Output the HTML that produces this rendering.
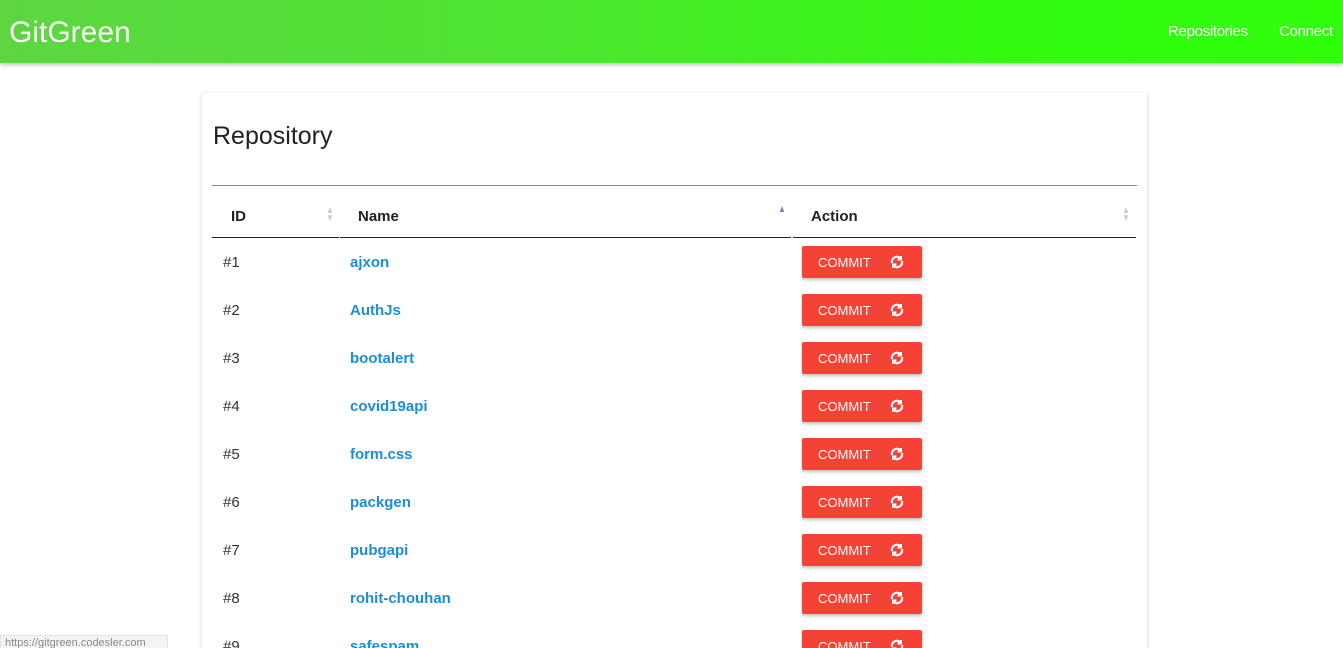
<!DOCTYPE html>
<html style="overflow:hidden;height:648px"><head><style>
*{box-sizing:border-box;margin:0;padding:0}
html,body{width:1343px;height:648px;overflow:hidden}
body{background:#fff;font-family:"Liberation Sans",sans-serif;position:relative}
.nav{position:absolute;left:0;top:0;width:1343px;height:63px;background:linear-gradient(90deg,#5dd641 0%,#4ee632 40%,#33fb10 75%,#30ff0c 100%);box-shadow:0 2px 4px rgba(0,0,0,.25)}
.logo{position:absolute;left:9px;top:16px;font-size:30px;color:#fff}
.nl{position:absolute;top:23px;font-size:15px;color:#fff;letter-spacing:-0.3px}
.card{position:absolute;left:202px;top:93px;width:945px;height:555px;overflow:hidden;background:#fff;box-shadow:0 1px 4px rgba(0,0,0,.2)}
h1{position:absolute;left:11px;top:29px;font-size:25px;font-weight:normal;color:#222}
.hr{position:absolute;left:10px;top:92px;width:925px;height:1px;background:#888}
.th{position:absolute;top:115px;font-size:15px;font-weight:bold;color:#222}
.hb{position:absolute;top:144px;height:1px;background:#222}
.sort{position:absolute;top:114px;font-size:10px;color:#ccc;line-height:8px;transform:scaleX(.8)}
.row{position:absolute;left:0;width:945px;height:48px}
.id{position:absolute;left:21px;top:0;font-size:15px;color:#333}
.nm{position:absolute;left:148px;top:0;font-size:15px;font-weight:bold;color:#1a8fd6}
.btn{position:absolute;left:600px;top:-8px;width:120px;height:32px;background:#f44336;border-radius:2px;box-shadow:0 2px 3px rgba(0,0,0,.25);color:#fff;font-size:13px;padding:9px 0 0 16px}
.btn svg{position:absolute;left:87px;top:8px}
.status{position:absolute;left:0;top:635px;width:168px;height:13px;overflow:hidden;background:#f4f4f4;border:1px solid #e2e2e2;border-bottom:0;font-size:11px;color:#888;padding:1px 4px}
</style></head><body>
<div class="nav"><div class="logo">GitGreen</div><div class="nl" style="left:1168px">Repositories</div><div class="nl" style="left:1279px">Connect</div></div>
<div class="card">
<h1>Repository</h1>
<div class="hr"></div>
<div class="th" style="left:29px">ID</div>
<div class="th" style="left:156px">Name</div>
<div class="th" style="left:609px">Action</div>
<div class="sort" style="left:123px">▲<br>▼</div>
<div class="sort" style="left:575px;color:#7b7bd0;top:113px">▲</div>
<div class="sort" style="left:919px">▲<br>▼</div>
<div class="hb" style="left:10px;width:127px"></div>
<div class="hb" style="left:138px;width:451px"></div>
<div class="hb" style="left:591px;width:343px"></div>
<div id="rows"></div>
</div>
<div class="status">https://gitgreen.codesler.com</div>
<script>
var n=["ajxon","AuthJs","bootalert","covid19api","form.css","packgen","pubgapi","rohit-chouhan","safespam"],h="";
n.forEach(function(x,i){h+='<div class="row" style="top:'+(161+i*48)+'px"><div class="id">#'+(i+1)+'</div><div class="nm">'+x+'</div><div class="btn">COMMIT<svg width="16" height="16" viewBox="0 0 16 16" fill="none" stroke="#fff" stroke-width="2.2"><path d="M3 9a5 5 0 0 1 9-4"/><path d="M13 7a5 5 0 0 1-9 4"/><path d="M12 2v3.5H8.5" stroke-width="2"/><path d="M4 14v-3.5h3.5" stroke-width="2"/></svg></div></div>'});
document.getElementById("rows").innerHTML=h;
</script>
</body></html>
